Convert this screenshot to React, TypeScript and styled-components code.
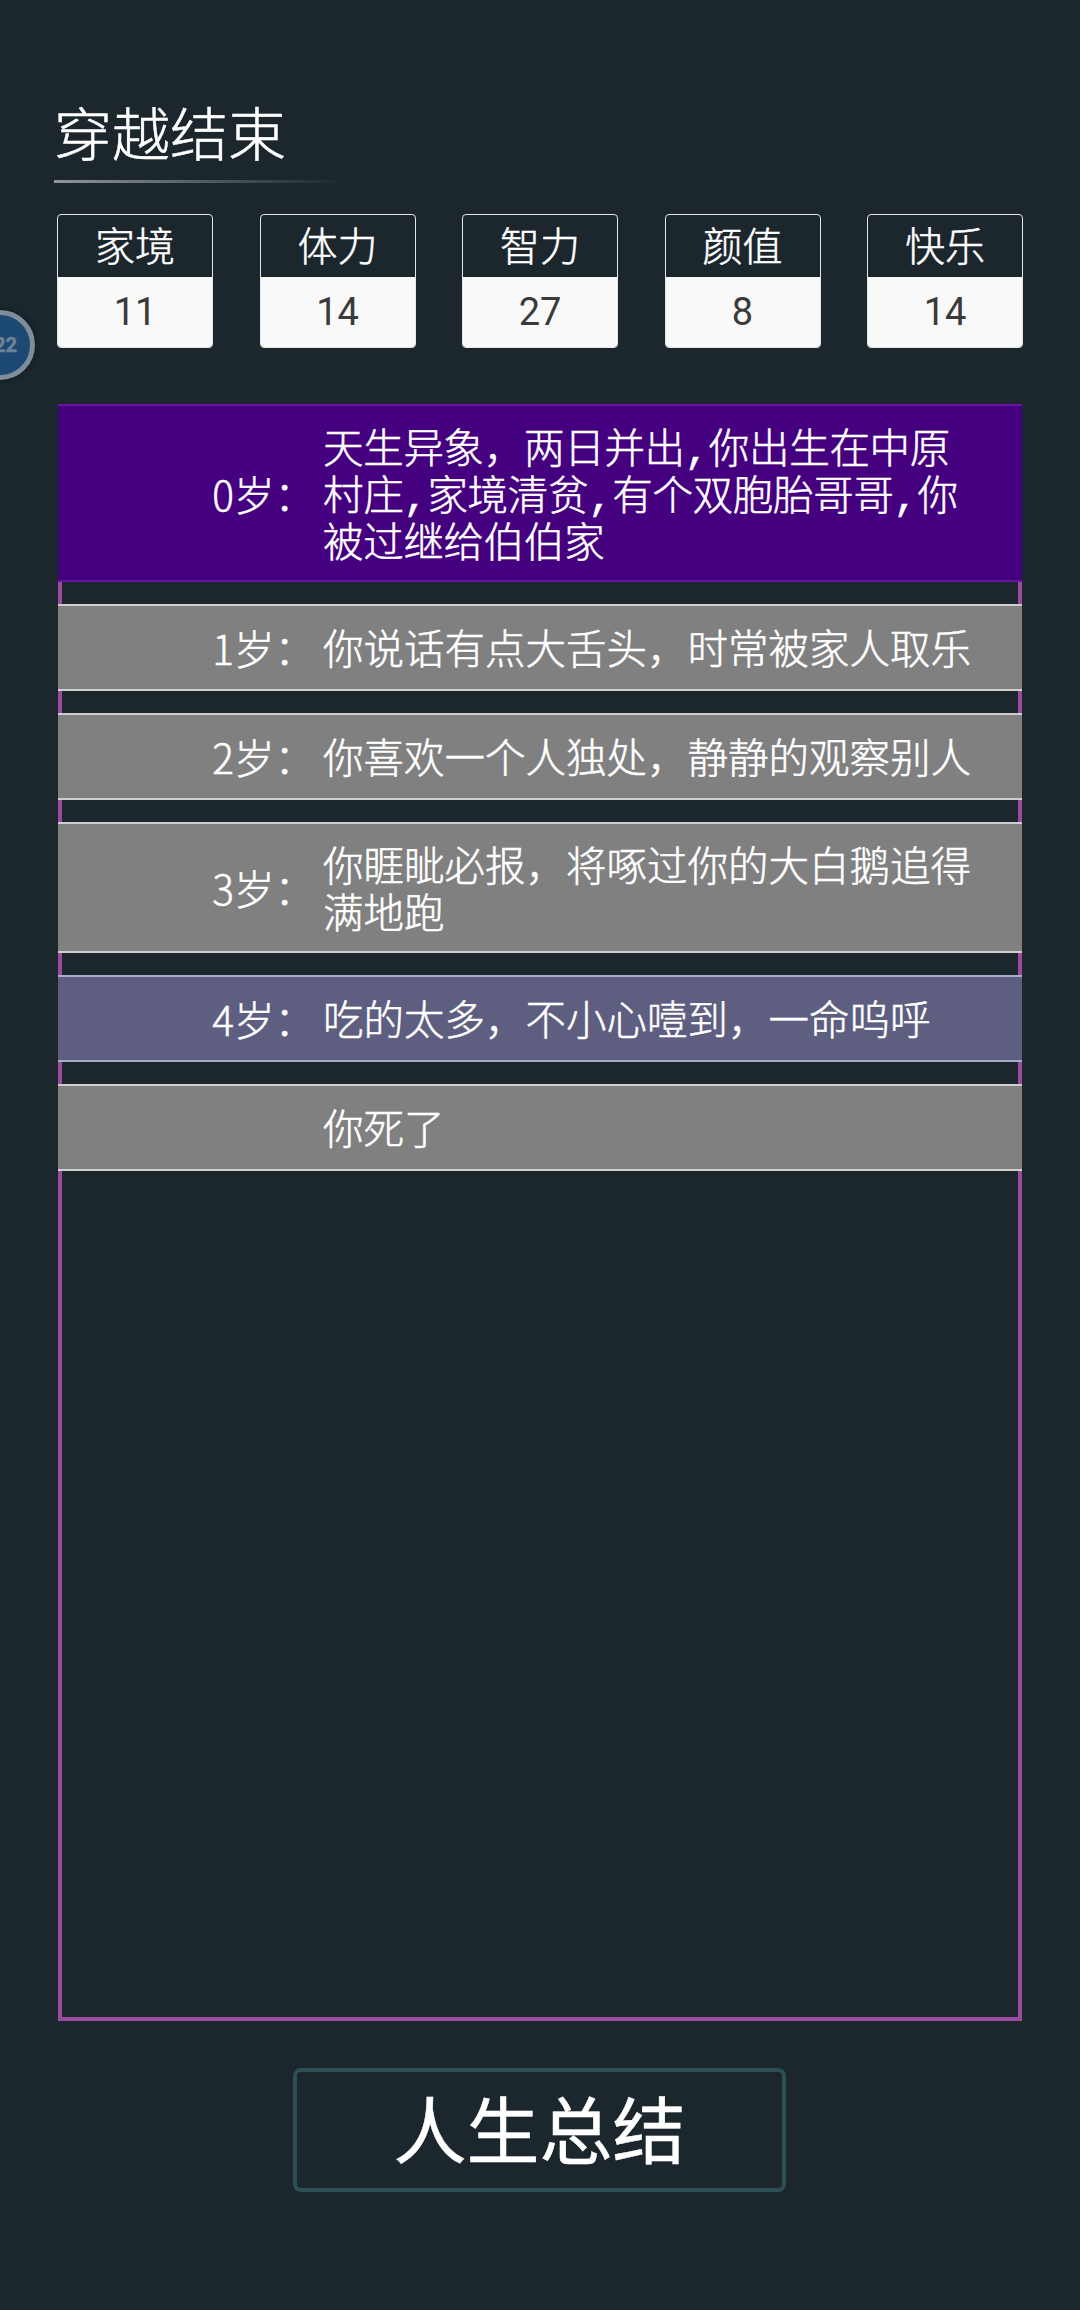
import { createGlobalStyle, styled } from 'styled-components';

const colors = {
  page: '#1c262d',
  white: '#ffffff',
  line: '#cfcfcf',
  purple: '#9c4a9f',
  gray: '#808080',
};

const stats = [
  { name: '家境', value: 11 },
  { name: '体力', value: 14 },
  { name: '智力', value: 27 },
  { name: '颜值', value: 8 },
  { name: '快乐', value: 14 },
];

type Tone = 'legend' | 'plain' | 'rare';

const events: { age?: string; text: string; tone: Tone }[] = [
  {
    age: '0岁：',
    tone: 'legend',
    text: '天生异象，两日并出,你出生在中原村庄,家境清贫,有个双胞胎哥哥,你被过继给伯伯家',
  },
  { age: '1岁：', tone: 'plain', text: '你说话有点大舌头，时常被家人取乐' },
  { age: '2岁：', tone: 'plain', text: '你喜欢一个人独处，静静的观察别人' },
  { age: '3岁：', tone: 'plain', text: '你睚眦必报，将啄过你的大白鹅追得满地跑' },
  { age: '4岁：', tone: 'rare', text: '吃的太多，不小心噎到，一命呜呼' },
  { tone: 'plain', text: '你死了' },
];

const toneStyles: Record<Tone, { bg: string; edge: string }> = {
  legend: { bg: '#45007f', edge: '#6a12a6' },
  plain: { bg: colors.gray, edge: colors.line },
  rare: { bg: '#5d5e80', edge: '#a9a9d0' },
};

export default function App() {
  return (
    <Page>
      <GlobalStyle />
      <FloatingBadge>22</FloatingBadge>
      <Title>穿越结束</Title>
      <Stats>
        {stats.map((stat) => (
          <StatCard key={stat.name}>
            <StatName>{stat.name}</StatName>
            <StatValue>{stat.value}</StatValue>
          </StatCard>
        ))}
      </Stats>
      <Log>
        {events.map((event, i) => (
          <Row key={i} $tone={event.tone}>
            <Age>{event.age}</Age>
            <Text $tight={event.tone === 'legend'}>{event.text}</Text>
          </Row>
        ))}
      </Log>
      <SummaryButton>人生总结</SummaryButton>
    </Page>
  );
}

const GlobalStyle = createGlobalStyle`
  html, body {
    margin: 0;
    background: ${colors.page};
  }
`;

const Page = styled.div`
  position: relative;
  box-sizing: border-box;
  width: 1080px;
  height: 2310px;
  padding: 92px 57px 0 54px;
  overflow: hidden;
  display: flex;
  flex-direction: column;
  background: ${colors.page};
  color: ${colors.white};
  font-family: 'Noto Sans CJK SC', 'Noto Sans', sans-serif;
  font-weight: 300;
  -webkit-text-stroke: 0.5px currentColor;
`;

const FloatingBadge = styled.div`
  position: absolute;
  left: -35px;
  top: 310px;
  box-sizing: border-box;
  width: 70px;
  height: 70px;
  border: 5px solid #7e8d99;
  border-radius: 50%;
  background: #1d4a75;
  color: #6d8296;
  font: 700 20px 'Roboto', sans-serif;
  line-height: 60px;
  text-align: right;
  padding-right: 13px;
  box-shadow: 0 0 6px rgba(0, 0, 0, 0.4);
`;

const Title = styled.div`
  box-sizing: border-box;
  width: 290px;
  height: 91px;
  font-size: 58px;
  line-height: 78px;
  border-bottom: 3px solid;
  border-image: linear-gradient(90deg, #8f979d, rgba(143, 151, 157, 0)) 1;
`;

const Stats = styled.div`
  margin: 31px 0 0 3px;
  display: flex;
  justify-content: space-between;
`;

const StatCard = styled.div`
  box-sizing: border-box;
  width: 156px;
  height: 134px;
  border: 1px solid #e6e6e6;
  border-radius: 4px;
  overflow: hidden;
  display: flex;
  flex-direction: column;
`;

const StatName = styled.div`
  flex: none;
  height: 62px;
  text-align: center;
  font-size: 40px;
  line-height: 59px;
`;

const StatValue = styled.div`
  flex: 1;
  background: #f9f9f9;
  color: #3a3a3a;
  text-align: center;
  font-family: 'Roboto', sans-serif;
  font-size: 38px;
  font-weight: 400;
  line-height: 70px;
  -webkit-text-stroke: 0;
`;

const Log = styled.div`
  box-sizing: border-box;
  margin: 56px 0 0 4px;
  width: 964px;
  height: 1617px;
  border: 4px solid ${colors.purple};
  border-top: 0;
  display: flex;
  flex-direction: column;
  gap: 22px;
`;

const Row = styled.div<{ $tone: Tone }>`
  box-sizing: border-box;
  min-height: 87px;
  margin: 0 -4px;
  padding: 16.5px 0;
  display: flex;
  align-items: center;
  background: ${({ $tone }) => toneStyles[$tone].bg};
  border-top: 2px solid ${({ $tone }) => toneStyles[$tone].edge};
  border-bottom: 2px solid ${({ $tone }) => toneStyles[$tone].edge};
`;

const Age = styled.div`
  width: 257px;
  flex: none;
  text-align: right;
  font-size: 40.5px;
  line-height: 47px;
`;

// the mono stack only picks up the half-width commas, which sit wide in the reference
const Text = styled.div<{ $tight: boolean }>`
  width: 650px;
  margin: 6px 0 -6px 8px;
  font-family: 'Liberation Mono', 'Noto Sans CJK SC', sans-serif;
  font-size: 40.5px;
  line-height: 47px;
  letter-spacing: ${({ $tight }) => ($tight ? '-0.3px' : '0')};
`;

const SummaryButton = styled.div`
  box-sizing: border-box;
  margin: 47px 0 0 239px;
  width: 493px;
  height: 124px;
  border: 4px solid #2f4f56;
  border-radius: 8px;
  text-align: center;
  font-size: 73px;
  line-height: 108px;
  font-weight: 400;
  -webkit-text-stroke: 0.5px currentColor;
`;
